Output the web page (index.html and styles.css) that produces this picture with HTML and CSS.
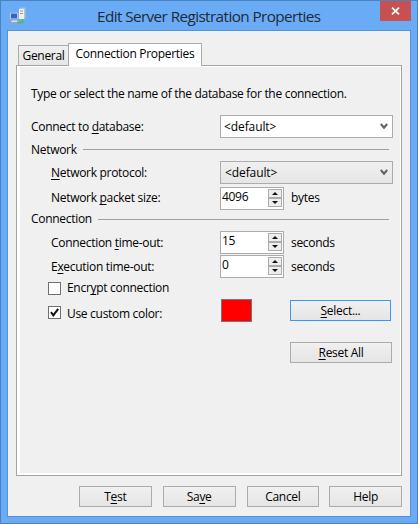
FILE: index.html
```
<!DOCTYPE html>
<html lang="en">
<head>
<meta charset="utf-8">
<title>Edit Server Registration Properties</title>
<link rel="stylesheet" href="styles.css">
</head>
<body>
<div class="window">
  <header class="titlebar">
    <svg class="app-icon" width="18" height="18" viewBox="0 0 18 18">
      <path d="M10 2 12 .5h4.5V11L15 12h-5z" fill="#b9c0c8"/>
      <path d="M10 2h5v10h-5z" fill="#eef0f0"/>
      <path d="M11 4h3M11 6.5h3" stroke="#8f9ba7"/>
      <path d="M1 5.5h8v7H1z" fill="#d9e4f0" stroke="#9aabc0"/>
      <path d="M2 6.5h6v5H2z" fill="#2867d5"/>
      <path d="M3 13h5l2 2.5H1z" fill="#d4dce5" stroke="#8999b0" stroke-width=".6"/>
      <path d="M8 15.5h5.5V12" fill="none" stroke="#50bd40" stroke-width="1.5"/>
    </svg>
    <h1 class="title">Edit Server Registration Properties</h1>
    <button class="close" aria-label="Close"><svg width="9" height="8" viewBox="0 0 9 8"><path d="M1 .7 8 7.3M8 .7 1 7.3" stroke="#fff" stroke-width="1.7"/></svg></button>
  </header>
  <main class="client">
    <nav class="tabs">
      <div class="tab">General</div>
      <div class="tab active">Connection Properties</div>
    </nav>
    <section class="panel">
      <p class="intro">Type or select the name of the database for the connection.</p>
      <div class="row database">
        <label class="label">Connect to <u>d</u>atabase:</label>
        <div class="combo editable"><span class="value">&lt;default&gt;</span><svg class="chevron" width="8" height="7" viewBox="0 0 8 7"><path d="M.8 1 4 4.7 7.2 1" fill="none" stroke="#606060" stroke-width="2"/></svg></div>
      </div>
      <div class="group network"><span>Network</span></div>
      <div class="row protocol">
        <label class="label indent"><u>N</u>etwork protocol:</label>
        <div class="combo"><span class="value">&lt;default&gt;</span><svg class="chevron" width="8" height="7" viewBox="0 0 8 7"><path d="M.8 1 4 4.7 7.2 1" fill="none" stroke="#606060" stroke-width="2"/></svg></div>
      </div>
      <div class="row packet">
        <label class="label indent">Network <u>p</u>acket size:</label>
        <div class="spin"><span class="number">4096</span><span class="arrows"><i class="up"></i><i class="down"></i></span></div>
        <span class="unit">bytes</span>
      </div>
      <div class="group connection"><span>Connection</span></div>
      <div class="row timeout">
        <label class="label indent">Connection <u>t</u>ime-out:</label>
        <div class="spin"><span class="number">15</span><span class="arrows"><i class="up"></i><i class="down"></i></span></div>
        <span class="unit">seconds</span>
      </div>
      <div class="row execution">
        <label class="label indent">E<u>x</u>ecution time-out:</label>
        <div class="spin"><span class="number">0</span><span class="arrows"><i class="up"></i><i class="down"></i></span></div>
        <span class="unit">seconds</span>
      </div>
      <div class="row encrypt">
        <span class="check"></span>
        <label class="check-label">Encr<u>y</u>pt connection</label>
      </div>
      <div class="row color">
        <span class="check"><svg width="11" height="11" viewBox="0 0 11 11"><path d="M2 5.2 4.3 8.3 9.2 1.8" fill="none" stroke="#111" stroke-width="2"/></svg></span>
        <label class="check-label custom">Use custom color:</label>
        <span class="swatch"></span>
        <button class="btn select"><span><u>S</u>elect...</span></button>
      </div>
      <div class="row reset-row"><button class="btn reset"><span><u>R</u>eset All</span></button></div>
    </section>
    <footer class="footer">
      <button class="btn"><span>T<u>e</u>st</span></button>
      <button class="btn"><span>Sa<u>v</u>e</span></button>
      <button class="btn"><span>Cancel</span></button>
      <button class="btn help"><span>Help</span></button>
    </footer>
  </main>
</div>
</body>
</html>
```
FILE: styles.css
```
* { box-sizing: border-box; }
body {
  margin: 0;
  font: 12px/16px "Open Sans", "Noto Sans", sans-serif;
  letter-spacing: -0.3px;
  color: #000;
  white-space: nowrap;
}
u { text-decoration: underline; text-decoration-thickness: 1px; text-underline-offset: 2px; text-decoration-skip-ink: none; }
.window {
  width: 418px;
  height: 524px;
  padding: 0 7px 7px;
  background: #6aabf5;
  border: 1px solid #4a82bd;
  display: flex;
  flex-direction: column;
}
.titlebar { height: 29px; display: flex; align-items: flex-start; }
.app-icon { margin: 6px 0 0 1px; flex: none; }
.title {
  margin: 4px 0 0 70px;
  width: 224px;
  font-size: 15.3px;
  line-height: 22px;
  font-weight: 400;
  letter-spacing: -0.6px;
  color: #202a36;
}
.close {
  width: 31px;
  height: 20px;
  margin-left: auto;
  margin-right: -1px;
  padding: 0;
  border: 0;
  background: #c75050;
  display: flex;
  align-items: center;
  justify-content: center;
}
.client {
  flex: 1;
  margin: 0 -1px -1px;
  background: #f0f0f0;
  border: 1px solid #5492d4;
  padding: 12px 8px 0;
}
.tabs { height: 22px; display: flex; align-items: flex-end; padding-left: 2px; }
.tab {
  width: 50px;
  height: 20px;
  border: 1px solid #acacac;
  border-right: 0;
  border-bottom: 0;
  background: linear-gradient(#f0f0f0, #e6e6e6);
  text-align: center;
  line-height: 20px;
}
.tab.active {
  position: relative;
  width: 134px;
  height: 23px;
  margin-bottom: -1px;
  border-right: 1px solid #acacac;
  background: #fff;
  line-height: 20px;
}
.panel {
  width: 386px;
  height: 411px;
  border: 1px solid #a5a5a5;
  box-shadow: inset 3px 0 #fff, inset -1px 0 #fff, inset 0 1px #fff, inset 0 -2px #fff;
  padding: 16px 8px 0 14px;
}
.row { display: flex; align-items: center; height: 23px; }
.intro { margin: 0; height: 33px; line-height: 24px; }
.label { width: 189px; flex: none; }
.label.indent { padding-left: 20px; }
.combo {
  width: 173px;
  height: 23px;
  display: flex;
  align-items: center;
  justify-content: space-between;
  border: 1px solid #acacac;
  background: linear-gradient(#f0f0f0, #e5e5e5);
  padding: 0 4px;
}
.combo.editable { background: #fff; padding-left: 3px; }
.value { letter-spacing: -0.1px; }
.group { height: 23px; display: flex; align-items: center; gap: 6px; margin-right: 4px; }
.group::after { content: ""; flex: 1; height: 1px; background: #a0a0a0; }
.group.connection { height: 18px; margin-bottom: 3px; }
.packet { margin-top: 3px; }
.packet .label, .packet .unit { margin-top: -2px; }
.execution { margin-top: 1px; }
.spin {
  width: 64px;
  height: 23px;
  display: flex;
  justify-content: space-between;
  border: 1px solid #acacac;
  background: #fff;
  padding: 1px 1px 2px;
}
.number { line-height: 16px; }
.arrows { width: 14px; display: flex; flex-direction: column; }
.arrows i {
  flex: 1;
  display: flex;
  align-items: center;
  justify-content: center;
  background: #eee;
  border: 1px solid #acacac;
}
.arrows i::after { content: ""; border: 3px solid transparent; border-top: 0; border-bottom-color: #111; }
.arrows .down::after { border: 3px solid transparent; border-bottom: 0; border-top-color: #111; }
.unit { margin-left: 7px; }
.encrypt { height: 18px; margin-top: 1px; padding-left: 17px; }
.color { margin-top: 2px; padding-left: 17px; }
.check { width: 13px; height: 13px; border: 1px solid #707070; background: #fff; flex: none; }
.check svg { display: block; }
.color .check { margin-top: 4px; }
.check-label { margin-left: 6px; }
.check-label.custom { width: 154px; margin-top: 6px; }
.swatch { width: 31px; height: 23px; background: #f00; border: 1px solid #777; flex: none; }
.btn {
  width: 73px;
  height: 21px;
  padding: 0;
  border: 1px solid #acacac;
  background: linear-gradient(#f0f0f0, #e5e5e5);
  font: inherit;
  letter-spacing: inherit;
  color: inherit;
  line-height: 18px;
}
.select { width: 101px; margin-left: 38px; border-color: #3399ff; }
.reset-row { margin-top: 19px; padding-left: 259px; }
.reset { width: 102px; }
.footer { display: flex; gap: 11px; padding: 10px 0 0 63px; }
.help { margin-left: -1px; }
```
